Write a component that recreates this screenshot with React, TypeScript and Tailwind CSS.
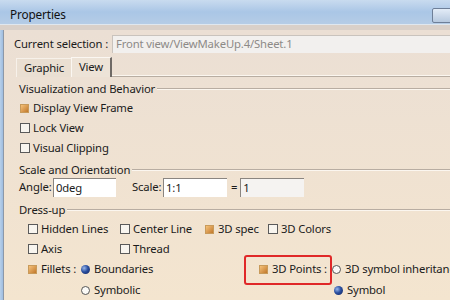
import React from "react";

const font = { fontFamily: '"Segoe UI", "Noto Sans", sans-serif' };

function Check({ checked }: { checked?: boolean }) {
  return checked ? (
    <span className="inline-block w-[9px] h-[9px] shrink-0 border border-[#c89a5a] bg-gradient-to-br from-[#f6c27a] to-[#c07828] mr-[4px]" />
  ) : (
    <span className="inline-block w-[10px] h-[10px] shrink-0 border border-[#5a5a5a] bg-[#f8f5ef] mr-[3px]" />
  );
}

function Radio({ checked }: { checked?: boolean }) {
  return checked ? (
    <span className="inline-block w-[9px] h-[9px] shrink-0 rounded-full bg-[radial-gradient(circle_at_35%_35%,#9ab8ec_0%,#2a4fa0_45%,#0c1f5a_100%)] mr-[4px]" />
  ) : (
    <span className="inline-block w-[9px] h-[9px] shrink-0 rounded-full border border-[#555] bg-[#fbfaf7] mr-[4px]" />
  );
}

function GroupTitle({ text, className = "" }: { text: string; className?: string }) {
  return (
    <div className={`flex items-center h-[18px] ${className}`}>
      <span className="pl-[15px] pr-[2px] whitespace-nowrap">{text}</span>
      <div className="flex-1 flex flex-col">
        <div className="h-px bg-[#b8ada2]" />
        <div className="h-px bg-[#fbf6ef]" />
      </div>
    </div>
  );
}

export default function App() {
  return (
    <div
      className="w-[450px] h-[300px] overflow-hidden flex flex-col text-[11.3px] tracking-[-0.15px] text-[#1b1b1b] bg-[#eadfd3]"
      style={font}
    >
      {/* title bar */}
      <div className="h-[30px] shrink-0 flex flex-col">
        <div className="h-[24px] flex items-center bg-gradient-to-b from-[#c9dbef] via-[#aac6e6] to-[#b5cce6] pl-[10px] relative">
          <span className="text-[11.8px] text-[#111] mt-[6px]">Properties</span>
          <div className="absolute right-[-6px] top-[8px] w-[24px] h-[15px] border border-[#6e7f98] rounded-[2px] bg-gradient-to-b from-[#e3ecf7] to-[#b7c9df]" />
        </div>
        <div className="h-[1px] bg-[#dfe7ef]" />
        <div className="flex-1 bg-[#d9d0c9]" />
      </div>

      <div className="flex flex-1 min-h-0">
        {/* left window border */}
        <div className="w-[4px] shrink-0 bg-gradient-to-r from-[#b7cfe9] to-[#9fbde0] border-r border-[#8c98a8]" />

        <div className="flex-1 flex flex-col bg-gradient-to-b from-[#ebdfd4] to-[#f4e5cf]">
          {/* current selection */}
          <div className="flex items-center h-[18px] mt-[5px]">
            <span className="pl-[10px] pr-[4px] whitespace-nowrap">Current selection :</span>
            <div className="flex-1 h-[18px] bg-[#f2f0ee] border-t border-l border-[#c9c3bd] flex items-center pl-[3px] text-[#8d8a87] whitespace-nowrap overflow-hidden">
              Front view/ViewMakeUp.4/Sheet.1
            </div>
          </div>

          {/* tabs */}
          <div className="flex items-end h-[20px] mt-[4px] pl-[12px]">
            <div className="h-[19px] w-[55px] flex items-center justify-center border-t border-l border-[#f7f1ea] bg-[#eadfd2]">
              Graphic
            </div>
            <div className="h-[20px] w-[41px] flex items-center justify-center border-t border-l border-[#fbf7f2] border-r-2 border-r-[#6f6a66] bg-[#ede3d7]">
              View
            </div>
            <div className="flex-1 flex flex-col self-end">
              <div className="h-px bg-[#fbf6ef]" />
              <div className="h-px bg-[#b8ada2]" />
            </div>
          </div>

          {/* panel */}
          <div className="flex flex-col">
            <GroupTitle text="Visualization and Behavior" className="mt-[3px]" />
            <div className="flex items-center h-[20px] pl-[16px]">
              <Check checked />
              <span>Display View Frame</span>
            </div>
            <div className="flex items-center h-[20px] pl-[16px]">
              <Check />
              <span>Lock View</span>
            </div>
            <div className="flex items-center h-[20px] pl-[16px]">
              <Check />
              <span>Visual Clipping</span>
            </div>

            <GroupTitle text="Scale and Orientation" className="mt-[3px]" />
            <div className="flex items-center h-[19px] mt-[-1px]">
              <span className="pl-[15px] w-[49px]">Angle:</span>
              <div className="w-[63px] h-[19px] bg-white border-t border-l border-[#8a8580] flex items-center pl-[2px]">
                0deg
              </div>
              <span className="ml-[16px] w-[31px]">Scale:</span>
              <div className="w-[64px] h-[19px] bg-white border-t border-l border-[#8a8580] flex items-center pl-[2px]">
                1:1
              </div>
              <span className="ml-[4px]">=</span>
              <div className="w-[64px] h-[19px] bg-[#f5f3f1] border-t border-l border-[#8a8580] flex items-center pl-[2px] ml-[3px]">
                1
              </div>
            </div>

            <GroupTitle text="Dress-up" className="mt-[4px]" />
            <div className="flex items-center h-[20px] pl-[24px]">
              <div className="w-[92px] flex items-center">
                <Check />
                <span>Hidden Lines</span>
              </div>
              <div className="w-[85px] flex items-center">
                <Check />
                <span>Center Line</span>
              </div>
              <div className="w-[63px] flex items-center">
                <Check checked />
                <span>3D spec</span>
              </div>
              <div className="flex items-center">
                <Check />
                <span>3D Colors</span>
              </div>
            </div>
            <div className="flex items-center h-[20px] pl-[24px]">
              <div className="w-[92px] flex items-center">
                <Check />
                <span>Axis</span>
              </div>
              <div className="flex items-center">
                <Check />
                <span>Thread</span>
              </div>
            </div>
            <div className="flex items-center h-[21px] pl-[24px]">
              <div className="w-[53px] flex items-center">
                <Check checked />
                <span>Fillets :</span>
              </div>
              <div className="w-[163px] flex items-center">
                <Radio checked />
                <span>Boundaries</span>
              </div>
              <div className="w-[88px] h-[30px] -my-[5px] border-2 border-[#e02828] rounded-[3px] flex items-center justify-end pr-[3px]">
                <Check checked />
                <span className="whitespace-nowrap">3D Points :</span>
              </div>
              <div className="flex items-center whitespace-nowrap">
                <Radio />
                <span>3D symbol inheritance</span>
              </div>
            </div>
            <div className="flex items-center h-[20px] pl-[77px]">
              <div className="w-[253px] flex items-center">
                <Radio />
                <span>Symbolic</span>
              </div>
              <div className="flex items-center">
                <Radio checked />
                <span>Symbol</span>
              </div>
            </div>
          </div>
        </div>
      </div>
    </div>
  );
}
